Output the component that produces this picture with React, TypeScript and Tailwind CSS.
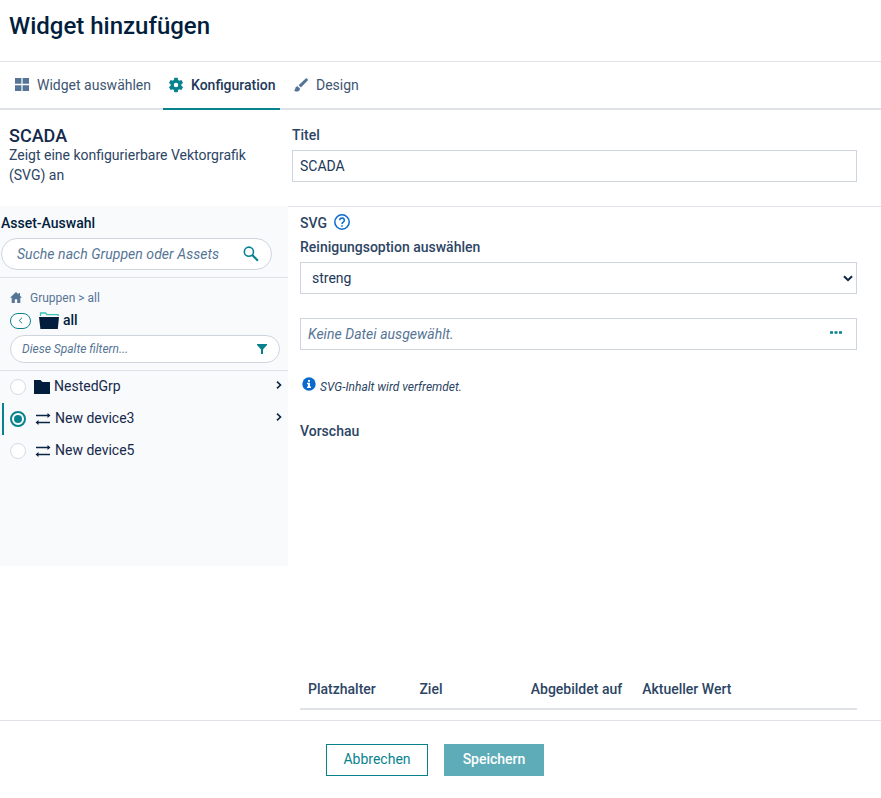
import type { ReactNode } from 'react';

function Tab({ icon, label, active, className }: { icon: ReactNode; label: string; active?: boolean; className: string }) {
  return (
    <div
      className={`flex h-12 items-center border-b-2 pb-px ${
        active ? 'border-[#08838e] font-medium text-[#22385a]' : 'border-transparent text-[#3d5573]'
      } ${className}`}
    >
      {icon}
      <span className="whitespace-nowrap">{label}</span>
    </div>
  );
}

function GridIcon() {
  return (
    <svg width="14" height="13" viewBox="0 0 14 13" fill="#567596" className="mr-2 shrink-0">
      <path d="M0 0h6.4v5.8H0zM7.6 0H14v5.8H7.6zM0 7.2h6.4V13H0zM7.6 7.2H14V13H7.6z" />
    </svg>
  );
}

function GearIcon() {
  return (
    <svg width="18" height="18" viewBox="0 0 24 24" fill="#08838e" className="mr-1.5 shrink-0">
      <path d="M19.14 12.94c.04-.3.06-.61.06-.94s-.02-.64-.07-.94l2.03-1.58a.49.49 0 0 0 .12-.61l-1.92-3.32a.49.49 0 0 0-.59-.22l-2.39.96a7 7 0 0 0-1.62-.94l-.36-2.54a.48.48 0 0 0-.48-.41h-3.84a.47.47 0 0 0-.47.41l-.36 2.54c-.59.24-1.13.57-1.62.94l-2.39-.96a.48.48 0 0 0-.59.22L2.74 8.87a.47.47 0 0 0 .12.61l2.03 1.58a6 6 0 0 0 0 1.88l-2.03 1.58a.49.49 0 0 0-.12.61l1.92 3.32c.12.22.37.29.59.22l2.39-.96c.5.38 1.03.7 1.62.94l.36 2.54c.05.24.24.41.48.41h3.84c.24 0 .44-.17.47-.41l.36-2.54c.59-.24 1.13-.56 1.62-.94l2.39.96c.22.08.47 0 .59-.22l1.92-3.32a.47.47 0 0 0-.12-.61zM12 15a3 3 0 1 1 0-6 3 3 0 0 1 0 6z" />
    </svg>
  );
}

function BrushIcon() {
  return (
    <svg width="14" height="14" viewBox="0 0 14 14" fill="#567596" className="mr-2 shrink-0">
      <path d="M11.700.5 4.600 7.300l2.300 2.300L13.700 2.600c.4-.5.3-1-.2-1.500C13 .4 12.300 0 11.700.5zM3.600 8.200C2.200 8.200 1.300 9.200 1.300 10.500c0 .9-.7 1.500-1.300 1.700.8 1.100 2.200 1.500 3.400 1.300 1.600-.2 2.700-1.400 2.600-2.900z" />
    </svg>
  );
}

function SearchIcon() {
  return (
    <svg width="16" height="16" viewBox="0 0 16 16" fill="none" stroke="#08838e" className="mb-px">
      <circle cx="5.900" cy="5.700" r="4.600" strokeWidth="1.600" />
      <path d="m9.200 9 5.700 5.700" strokeWidth="2.200" />
    </svg>
  );
}

function HomeIcon() {
  return (
    <svg width="12" height="11" viewBox="0 0 12 11" fill="#567596" className="mr-2 mb-0.5 shrink-0">
      <path d="M6 0 0 5.700h1.700V11h3.100V7.200h2.400V11h3.100V5.700H12L10 3.800V1H8.600v1.400z" />
    </svg>
  );
}

function OpenFolderIcon() {
  return (
    <svg width="20" height="17" viewBox="0 0 20 17" className="mr-1 shrink-0">
      <path d="M1.500 4V1h5l1.500 1.700h11V4" fill="none" stroke="#3cc1b5" strokeWidth="1.300" />
      <path d="M0 5h20l-1.200 12H1.400z" fill="#011e3d" />
    </svg>
  );
}

function FolderIcon() {
  return (
    <svg width="16" height="14" viewBox="0 0 16 14" className="mr-1 ml-2 shrink-0">
      <path d="M0 0h6.500l2 2H16v12H0z" fill="#011e3d" />
    </svg>
  );
}

function ExchangeIcon() {
  return (
    <svg width="16" height="12" viewBox="0 0 16 12" fill="none" stroke="#0b2545" className="mr-[4.5px] ml-[8.5px] shrink-0">
      <path d="M1 2.500h13M2 9.500h13" strokeWidth="1.300" />
      <path d="m12.500 0 3 2.500-3 2.500zM3.500 7l-3 2.500 3 2.500z" fill="#0b2545" stroke="none" />
    </svg>
  );
}

function ChevronRight() {
  return (
    <svg width="6" height="8" viewBox="0 0 6 8" fill="none" stroke="#0b2545" strokeWidth="1.600" className="mr-1.5 mb-1 ml-auto">
      <path d="m1 .7 3.500 3.300L1 7.300" />
    </svg>
  );
}

function AssetRow({ icon, label, selected, expandable }: { icon: ReactNode; label: string; selected?: boolean; expandable?: boolean }) {
  return (
    <div className={`ml-0.5 flex h-8 items-center border-l-2 pl-1.5 ${selected ? 'border-[#08838e]' : 'border-transparent'}`}>
      <span
        className={`flex size-4 shrink-0 items-center justify-center rounded-full bg-white ${
          selected ? 'border-2 border-[#08838e]' : 'border border-[#d5dbe3]'
        }`}
      >
        {selected && <span className="size-2 rounded-full bg-[#08838e]" />}
      </span>
      {icon}
      <span className="pb-0.5 whitespace-nowrap text-[#14294a]">{label}</span>
      {expandable && <ChevronRight />}
    </div>
  );
}

function Sidebar() {
  return (
    <aside className="h-[360px] w-[288px] shrink-0 bg-[#f9fafc]">
      <div className="h-[72px] border-b border-[#dfe3e8] pt-[7px] pl-px">
        <div className="font-medium text-[#011e3d]">Asset-Auswahl</div>
        <div className="mt-[5px] flex h-8 w-[271px] items-center justify-between rounded-full border border-[#ced5df] bg-white pr-3 pl-[15px]">
          <span className="tracking-[0.05px] text-[#567596] italic">Suche nach Gruppen oder Assets</span>
          <SearchIcon />
        </div>
      </div>
      <div className="h-[93px] border-b border-[#dfe3e8] pt-2.5 pl-2.5">
        <div className="flex h-5 items-center text-[12px] text-[#567596]">
          <HomeIcon />
          <span>Gruppen &gt; all</span>
        </div>
        <div className="mt-0.5 flex h-5 items-center pt-px">
          <span className="mr-2 flex h-4 w-[21px] items-center justify-center rounded-full border border-[#08838e] bg-white">
            <svg width="5" height="7" viewBox="0 0 5 7" fill="none" stroke="#08838e">
              <path d="M4 .8 1.200 3.500 4 6.200" />
            </svg>
          </span>
          <OpenFolderIcon />
          <span className="pb-px font-medium text-[#011e3d]">all</span>
        </div>
        <div className="mt-[5px] flex h-7 w-[270px] items-center justify-between rounded-full border border-[#ced5df] bg-white pr-3 pl-[11px]">
          <span className="text-[12px] text-[#567596] italic">Diese Spalte filtern...</span>
          <svg width="10" height="10" viewBox="0 0 10 10" fill="#08838e">
            <path d="M0 0h10v1L6 5.500V10H4V5.500L0 1z" />
          </svg>
        </div>
      </div>
      <AssetRow icon={<FolderIcon />} label="NestedGrp" expandable />
      <AssetRow icon={<ExchangeIcon />} label="New device3" selected expandable />
      <AssetRow icon={<ExchangeIcon />} label="New device5" />
    </aside>
  );
}

function Details() {
  return (
    <section className="flex flex-1 flex-col border-t border-[#dfe3e8] pr-6 pl-3">
      <div className="mt-1.5 flex h-5 items-center">
        <span className="font-medium">SVG</span>
        <svg width="16" height="16" viewBox="0 0 16 16" fill="none" stroke="#0a6bce" className="mb-0.5 ml-[7px]">
          <circle cx="8" cy="8" r="7.200" strokeWidth="1.500" />
          <path d="M5.700 6.200a2.300 2.300 0 1 1 3.500 2C8.300 8.800 8 9.100 8 10M8 11.300v1.500" strokeWidth="1.500" />
        </svg>
      </div>
      <div className="mt-1 h-5 font-medium">Reinigungsoption auswählen</div>
      <div className="mt-[5px] flex h-8 items-center justify-between border border-[#ced5df] pr-[3px] pl-[11px] text-[#22385a]">
        <span>streng</span>
        <svg width="10" height="7" viewBox="0 0 10 7" fill="none" stroke="#0b2545" strokeWidth="2">
          <path d="m1 1.200 4 4 4-4" />
        </svg>
      </div>
      <div className="mt-6 flex h-8 items-center justify-between border border-[#ced5df] pr-3.5 pl-[7px]">
        <span className="tracking-[0.04px] text-[#567596] italic">Keine Datei ausgewählt.</span>
        <svg width="12" height="3" viewBox="0 0 12 3" fill="#08838e" className="mb-[3px]">
          <path d="M0 .3h3v2.400H0zM4.500.3h3v2.400h-3zM9 .3h3v2.400H9z" />
        </svg>
      </div>
      <div className="mt-[26px] flex h-5 items-center pl-0.5">
        <svg width="14" height="14" viewBox="0 0 14 14" className="mr-1 mb-1">
          <circle cx="7" cy="7" r="6.700" fill="#0a6bce" />
          <path d="M6 3h2v1.700H6zM5 5.800h3v3.700h1V11H5V9.500h1V7.200H5z" fill="#fff" />
        </svg>
        <span className="pt-0.5 text-[12px] italic">SVG-Inhalt wird verfremdet.</span>
      </div>
      <div className="mt-[25px] h-5 font-medium">Vorschau</div>
      <div className="mt-auto grid h-[42px] grid-cols-[111.400px_111.400px_111.400px_1fr] items-center border-b-2 border-[#dfe3e8] pt-px pl-2 font-medium whitespace-nowrap">
        <span>Platzhalter</span>
        <span>Ziel</span>
        <span>Abgebildet auf</span>
        <span>Aktueller Wert</span>
      </div>
    </section>
  );
}

export default function App() {
  return (
    <div className="flex h-[798px] w-[881px] flex-col overflow-hidden bg-white font-['Roboto',sans-serif] text-[14px] leading-5 text-[#2c4564]">
      <header className="h-[62px] border-b border-[#dfe3e8] pt-2.5 pl-[9px]">
        <h1 className="text-[24px] leading-8 font-medium text-[#011e3d]">Widget hinzufügen</h1>
      </header>
      <nav className="flex h-12 shadow-[inset_0_-2px_0_#dfe3e8]">
        <Tab icon={<GridIcon />} label="Widget auswählen" className="ml-[15px] w-[148px]" />
        <Tab icon={<GearIcon />} label="Konfiguration" className="w-[117px] pl-1" active />
        <Tab icon={<BrushIcon />} label="Design" className="pl-3.5" />
      </nav>
      <div className="flex h-24">
        <div className="w-[292px] pt-4 pl-[9px]">
          <h2 className="h-[19px] text-[18px] font-medium text-[#14294a]">SCADA</h2>
          <p className="w-[260px]">Zeigt eine konfigurierbare Vektorgrafik (SVG) an</p>
        </div>
        <div className="flex-1 pt-[15px] pr-6">
          <div className="font-medium">Titel</div>
          <div className="mt-[5px] flex h-8 items-center border border-[#ced5df] pl-[7px] text-[#22385a]">SCADA</div>
        </div>
      </div>
      <main className="flex h-[504px]">
        <Sidebar />
        <Details />
      </main>
      <footer className="mt-2.5 flex flex-1 items-start border-t border-[#dfe3e8] pt-[23px] pl-[326px]">
        <button className="h-8 w-[102px] border border-[#08838e] pb-0.5 text-[#08838e]">Abbrechen</button>
        <button className="ml-4 h-8 w-[100px] bg-[#5eacb8] pb-0.5 font-medium text-white">Speichern</button>
      </footer>
    </div>
  );
}
